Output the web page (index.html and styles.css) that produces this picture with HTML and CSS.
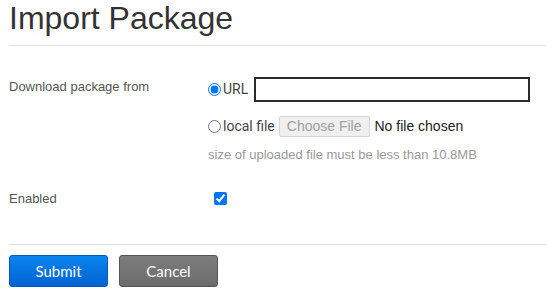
FILE: index.html
```html
<!DOCTYPE html>
<html lang="en">
<head>
  <meta charset="UTF-8">
  <title>Import Package</title>
  <link rel="stylesheet" href="styles.css">
</head>
<body>
  <h1 class="page-title">Import Package</h1>

  <form class="import-form">
    <div class="form-row">
      <label class="row-label">Download package from</label>
      <div class="row-field">
        <div class="source-line">
          <label class="radio-label"><input type="radio" name="source" checked> URL</label>
          <input type="text" class="url-input">
        </div>
        <div class="source-line">
          <label class="radio-label"><input type="radio" name="source"> local file</label>
          <button type="button" class="file-btn" disabled>Choose File</button>
          <span class="file-name">No file chosen</span>
        </div>
        <p class="help-text">size of uploaded file must be less than 10.8MB</p>
      </div>
    </div>

    <div class="form-row enabled-row">
      <label class="row-label">Enabled</label>
      <div class="row-field">
        <input type="checkbox" class="enabled-check" checked>
      </div>
    </div>

    <div class="form-actions">
      <button type="button" class="btn btn-submit">Submit</button>
      <button type="button" class="btn btn-cancel">Cancel</button>
    </div>
  </form>
</body>
</html>
```

FILE: styles.css
```css
/* Base */
body {
  margin: 0;
  padding: 0 0 0 9px;
  font-family: 'Liberation Sans', Arial, sans-serif;
  color: #555555;
  background: #ffffff;
  overflow: hidden;
}

/* Title */
.page-title {
  margin: 0;
  padding: 1px 0 10px;
  font-size: 32px;
  font-weight: normal;
  line-height: 34px;
  color: #333333;
  border-bottom: 1px solid #dddddd;
}

/* Form rows */
.import-form {
  padding-top: 30px;
}
.form-row {
  display: flex;
}
.row-label {
  width: 199px;
  font-size: 13px;
  line-height: 16px;
  padding-top: 3px;
}
.row-field {
  flex: 1;
}
.source-line {
  display: flex;
  align-items: center;
  height: 26px;
  margin-bottom: 11px;
}
.radio-label {
  display: flex;
  align-items: center;
  font-family: Roboto, sans-serif;
  font-size: 14px;
  color: #444444;
  margin-right: 3px;
}
.radio-label input {
  margin: 0 2px 0 0;
  width: 13px;
  height: 13px;
}
.url-input {
  width: 276px;
  height: 25px;
  box-sizing: border-box;
  border: 2px solid #2b2b2b;
  border-radius: 0;
  margin: 0 0 0 3px;
  padding: 0 4px;
}
.file-btn {
  height: 21px;
  padding: 0 7px;
  margin: 0 5px 0 1px;
  font-family: 'Liberation Sans', Arial, sans-serif;
  font-size: 14px;
  color: #a0a0a0;
  background: #efefef;
  border: 1px solid #d6d6d6;
  border-radius: 2px;
}
.file-name {
  font-size: 14px;
  color: #222222;
}
.help-text {
  margin: -3px 0 0;
  font-size: 13px;
  color: #999999;
}

/* Enabled */
.enabled-row {
  margin-top: 29px;
  padding-bottom: 35px;
  border-bottom: 1px solid #dddddd;
}
.enabled-row .row-label {
  padding-top: 0;
}
.enabled-check {
  margin: 0 0 0 6px;
  width: 13px;
  height: 13px;
}

/* Actions */
.form-actions {
  display: flex;
  gap: 11px;
  padding-top: 10px;
}
.btn {
  width: 99px;
  height: 32px;
  font-family: Lato, sans-serif;
  font-size: 15px;
  color: #ffffff;
  border-radius: 3px;
  cursor: pointer;
}
.btn-submit {
  background: linear-gradient(#0a84ee, #0063d1);
  border: 1px solid #0058c0;
}
.btn-cancel {
  background: linear-gradient(#7d7d7d, #6c6c6c);
  border: 1px solid #555555;
}
```
